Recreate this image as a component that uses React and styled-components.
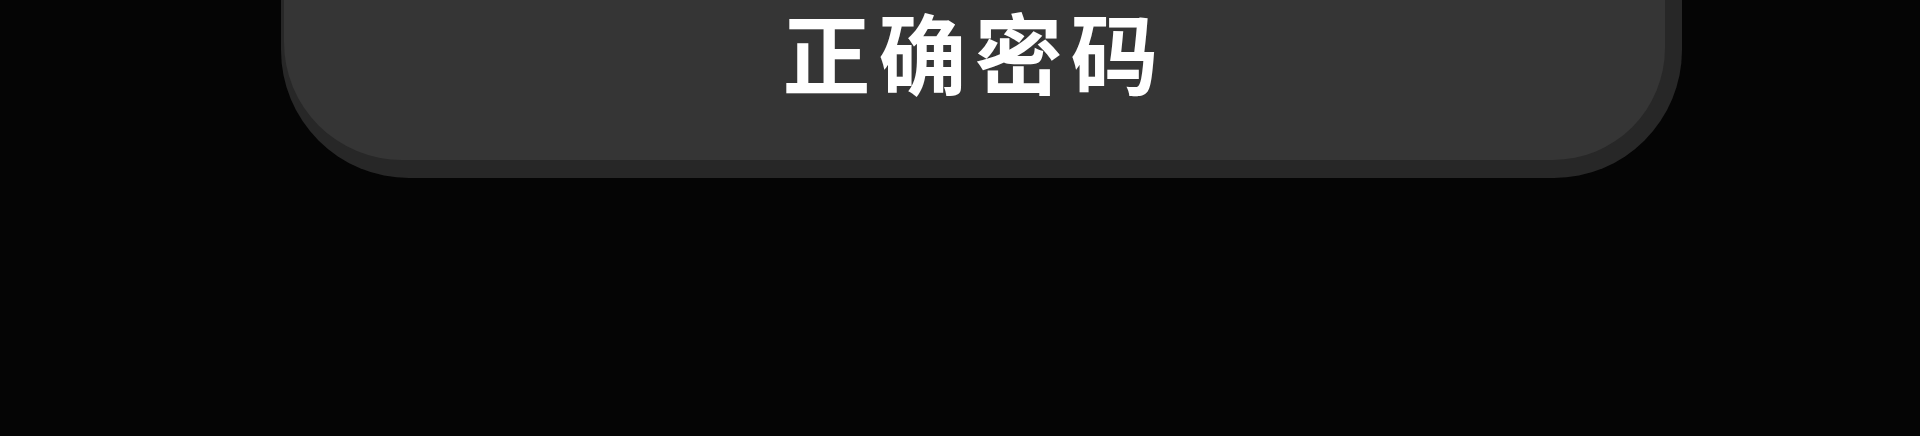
import React from 'react';
import styled, { createGlobalStyle } from 'styled-components';

const GlobalStyle = createGlobalStyle`
  html, body {
    margin: 0;
    padding: 0;
    background: #050505;
  }
  body {
    width: 1920px;
    height: 436px;
    overflow: hidden;
    font-family: "Noto Sans CJK SC", "Noto Sans", sans-serif;
  }
`;

const Page = styled.div`
  display: flex;
  justify-content: flex-start;
  height: 436px;
  padding-left: 281px;
  box-sizing: border-box;
  background: #050505;
`;

const KeyRim = styled.div`
  width: 1401px;
  height: 178px;
  box-sizing: border-box;
  padding: 0 17px 18px 3px;
  background: #272727;
  border-radius: 0 0 128px 128px;
  display: flex;
`;

const KeyFace = styled.div`
  flex: 1;
  display: flex;
  align-items: flex-start;
  justify-content: center;
  background: #353535;
  border-radius: 0 0 112px 118px;
`;

const Label = styled.span`
  color: #ffffff;
  font-size: 88px;
  font-weight: 700;
  line-height: 1;
  margin-top: 6px;
  margin-left: 0;
  letter-spacing: 8px;
`;

export default function App() {
  return (
    <>
      <GlobalStyle />
      <Page>
        <KeyRim>
          <KeyFace>
            <Label>正确密码</Label>
          </KeyFace>
        </KeyRim>
      </Page>
    </>
  );
}
